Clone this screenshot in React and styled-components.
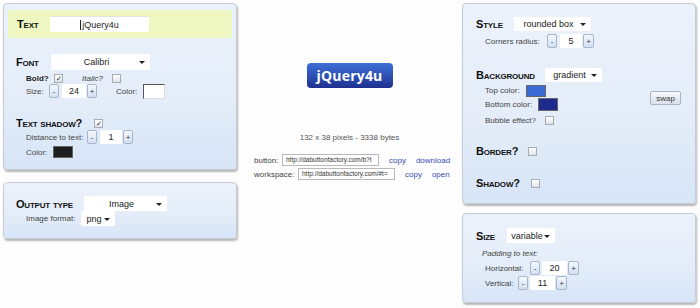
import React from 'react';
import styled, { createGlobalStyle } from 'styled-components';

const Global = createGlobalStyle`
    * { box-sizing: border-box; }
    body {
        margin: 0;
        background: #fdfdfd;
        font-family: "Liberation Sans", Arial, sans-serif;
        color: #333;
    }
`;

const Page = styled.div`
    display: flex;
    width: 700px;
    height: 308px;
    padding: 3px 4px 0 3px;
`;

const Column = styled.div`
    width: 234px;
    display: flex;
    flex-direction: column;
    gap: ${p => p.$gap}px;
`;

const Panel = styled.div`
    height: ${p => p.$h}px;
    border: 1px solid #c4cbd5;
    border-radius: 4px;
    background: linear-gradient(#ecf2fb, #e3ecf8 60%, #d7e5f7);
    box-shadow: 1px 2px 2px rgba(0, 0, 0, 0.28);
    overflow: hidden;
`;

const Band = styled.div`
    margin: 6px 4px 0 4px;
    height: 28px;
    padding-left: 9px;
    display: flex;
    align-items: center;
    background: #eef7c2;
`;

const Row = styled.div`
    display: flex;
    align-items: center;
    height: ${p => p.$h || 14}px;
    margin-top: ${p => p.$mt || 0}px;
    padding-left: ${p => p.$pl || 0}px;
`;

const Heading = styled.span`
    flex: none;
    width: ${p => p.$w}px;
    font: bold 11px "Liberation Sans", Arial, sans-serif;
    font-variant: small-caps;
    letter-spacing: -0.2px;
    color: #111;
`;

const Label = styled.span`
    flex: none;
    width: ${p => (p.$w ? p.$w + 'px' : 'auto')};
    margin-left: ${p => p.$ml || 0}px;
    font-size: 8px;
    font-style: ${p => (p.$italic ? 'italic' : 'normal')};
    font-weight: ${p => (p.$bold ? 'bold' : 'normal')};
    color: ${p => (p.$bold ? '#222' : '#444')};
    white-space: nowrap;
`;

const TextInput = styled.div`
    width: 99px;
    height: 16px;
    background: #fff;
    border-top: 1px solid #e4e4e4;
    display: flex;
    align-items: center;
    justify-content: center;
    font-size: 9px;
    color: #222;
`;

const Caret = styled.span`
    width: 1px;
    height: 10px;
    background: #222;
    margin-right: 1px;
`;

const Select = styled.div`
    flex: none;
    position: relative;
    width: ${p => p.$w}px;
    height: ${p => p.$h || 15}px;
    background: #fff;
    display: flex;
    align-items: center;
    justify-content: center;
    padding-right: 8px;
    font-size: ${p => p.$fs || 9}px;
    color: #222;
    &::after {
        content: '';
        position: absolute;
        right: 5px;
        top: 50%;
        margin-top: -1px;
        border-left: 3px solid transparent;
        border-right: 3px solid transparent;
        border-top: 3px solid #222;
    }
`;

const Check = styled.div`
    flex: none;
    width: 9px;
    height: 9px;
    margin-left: ${p => p.$ml || 0}px;
    border: 1px solid #a7acb3;
    background: linear-gradient(#ffffff, #dfe3e8);
    display: flex;
    align-items: center;
    justify-content: center;
    font-size: 7px;
    line-height: 1;
    color: #333;
`;

const StepBtn = styled.div`
    flex: none;
    width: ${p => p.$w || 10}px;
    height: 14px;
    margin-left: ${p => p.$ml || 0}px;
    border: 1px solid #a6b6cb;
    border-radius: 2px;
    background: linear-gradient(#f5f8fc, #d3dff0);
    display: flex;
    align-items: center;
    justify-content: center;
    font-size: 8px;
    color: #334;
`;

const Value = styled.div`
    flex: none;
    width: ${p => p.$w}px;
    height: 14px;
    margin-left: ${p => p.$ml || 0}px;
    background: #fff;
    display: flex;
    align-items: center;
    justify-content: center;
    font-size: 9px;
    color: #222;
`;

const Swatch = styled.div`
    flex: none;
    width: ${p => p.$w}px;
    height: ${p => p.$h}px;
    background: ${p => p.$c};
    border: 1px solid;
    border-color: ${p => (p.$inset ? '#555 #ddd #ddd #555' : '#666')};
`;

const SubBlock = styled.div`
    display: flex;
    align-items: flex-start;
`;

const SubRows = styled.div`
    display: flex;
    flex-direction: column;
`;

const SwapBtn = styled.div`
    margin: 9px 14px 0 auto;
    width: 31px;
    height: 14px;
    border: 1px solid #a9b2bf;
    border-radius: 2px;
    background: linear-gradient(#f7f9fc, #d9e1ec);
    display: flex;
    align-items: center;
    justify-content: center;
    font-size: 8px;
    color: #333;
`;

const Center = styled.div`
    flex: 1;
    display: flex;
    flex-direction: column;
`;

const Preview = styled.div`
    align-self: center;
    margin-top: 60px;
    width: 86px;
    height: 25px;
    border-radius: 4px;
    background: linear-gradient(#3e6fd6, #2c4fb2 55%, #1e2f8e);
    display: flex;
    align-items: center;
    justify-content: center;
    font: bold 14px "Open Sans", "Liberation Sans", sans-serif;
    color: #fff;
    letter-spacing: 0.2px;
`;

const Stats = styled.div`
    margin-top: 45px;
    height: 10px;
    text-align: center;
    font-size: 8px;
    color: #555;
`;

const LinkRow = styled.div`
    display: flex;
    align-items: center;
    height: 12px;
    margin-top: ${p => p.$mt}px;
    padding-left: 17px;
`;

const UrlBox = styled.div`
    flex: none;
    width: 97px;
    height: 12px;
    border: 1px solid #b9b9b9;
    background: #fff;
    padding: 0 3px;
    font-size: 6.5px;
    line-height: 10px;
    color: #333;
    white-space: nowrap;
    overflow: hidden;
`;

const Link = styled.span`
    margin-left: ${p => p.$ml || 10}px;
    font-size: 8px;
    color: #3a4cb4;
`;

const Stepper = ({ ml, value, w, gap = 3, pw }) => (
    <>
        <StepBtn $ml={ml}>-</StepBtn>
        <Value $w={w} $ml={gap}>{value}</Value>
        <StepBtn $ml={1} $w={pw}>+</StepBtn>
    </>
);

const App = () => {
    return (
        <Page>
            <Global />
            <Column $gap={12}>
                <Panel $h={167}>
                    <Band>
                        <Heading $w={33}>Text</Heading>
                        <TextInput><Caret />jQuery4u</TextInput>
                    </Band>
                    <Row $mt={16} $h={16} $pl={12}>
                        <Heading $w={35}>Font</Heading>
                        <Select $w={99} $h={16}>Calibri</Select>
                    </Row>
                    <Row $mt={3} $h={10} $pl={22}>
                        <Label $w={28} $bold>Bold?</Label>
                        <Check>✓</Check>
                        <Label $w={30} $ml={19} $italic>Italic?</Label>
                        <Check />
                    </Row>
                    <Row $mt={1} $pl={22}>
                        <Label $w={23}>Size:</Label>
                        <Stepper value="24" w={24} />
                        <Label $w={27} $ml={19}>Color:</Label>
                        <Swatch $w={22} $h={15} $c="#fff" $inset />
                    </Row>
                    <Row $mt={18} $pl={12}>
                        <Heading $w={78}>Text shadow?</Heading>
                        <Check>✓</Check>
                    </Row>
                    <Row $pl={22}>
                        <Label $w={61}>Distance to text:</Label>
                        <Stepper value="1" w={22} />
                    </Row>
                    <Row $mt={2} $h={12} $pl={22}>
                        <Label $w={27}>Color:</Label>
                        <Swatch $w={20} $h={12} $c="#1e1e1e" />
                    </Row>
                </Panel>
                <Panel $h={57}>
                    <Row $mt={13} $h={15} $pl={12}>
                        <Heading $w={68}>Output type</Heading>
                        <Select $w={83}>Image</Select>
                    </Row>
                    <Row $h={15} $pl={22}>
                        <Label $w={55}>Image format:</Label>
                        <Select $w={34}>png</Select>
                    </Row>
                </Panel>
            </Column>

            <Center>
                <Preview>jQuery4u</Preview>
                <Stats>132 x 38 pixels - 3338 bytes</Stats>
                <LinkRow $mt={11}>
                    <Label $w={28}>button:</Label>
                    <UrlBox>http://dabuttonfactory.com/b?t</UrlBox>
                    <Link>copy</Link>
                    <Link $ml={10}>download</Link>
                </LinkRow>
                <LinkRow $mt={2}>
                    <Label $w={44}>workspace:</Label>
                    <UrlBox>http://dabuttonfactory.com/#t=</UrlBox>
                    <Link>copy</Link>
                    <Link $ml={10}>open</Link>
                </LinkRow>
            </Center>

            <Column $gap={9}>
                <Panel $h={201}>
                    <Row $mt={13} $pl={13}>
                        <Heading $w={38}>Style</Heading>
                        <Select $w={77} $h={14}>rounded box</Select>
                    </Row>
                    <Row $mt={3} $pl={22}>
                        <Label $w={62}>Corners radius:</Label>
                        <Stepper value="5" w={22} pw={11} />
                    </Row>
                    <Row $mt={20} $pl={13}>
                        <Heading $w={69}>Background</Heading>
                        <Select $w={57} $h={14}>gradient</Select>
                    </Row>
                    <SubBlock>
                        <SubRows>
                            <Row $mt={2} $h={13} $pl={22}>
                                <Label $w={41}>Top color:</Label>
                                <Swatch $w={20} $h={12} $c="#3b6ad4" />
                            </Row>
                            <Row $mt={1} $h={13} $pl={22}>
                                <Label $w={53}>Bottom color:</Label>
                                <Swatch $w={20} $h={13} $c="#1f2b8c" />
                            </Row>
                            <Row $mt={4} $h={10} $pl={22}>
                                <Label $w={60}>Bubble effect?</Label>
                                <Check />
                            </Row>
                        </SubRows>
                        <SwapBtn>swap</SwapBtn>
                    </SubBlock>
                    <Row $mt={19} $pl={13}>
                        <Heading $w={52}>Border?</Heading>
                        <Check />
                    </Row>
                    <Row $mt={18} $pl={13}>
                        <Heading $w={55}>Shadow?</Heading>
                        <Check />
                    </Row>
                </Panel>
                <Panel $h={90}>
                    <Row $mt={14} $h={15} $pl={13}>
                        <Heading $w={31}>Size</Heading>
                        <Select $w={48}>variable</Select>
                    </Row>
                    <Row $mt={4} $h={12} $pl={19}>
                        <Label $italic>Padding to text:</Label>
                    </Row>
                    <Row $mt={2} $pl={22}>
                        <Label $w={45}>Horizontal:</Label>
                        <Stepper value="20" w={25} gap={2} pw={11} />
                    </Row>
                    <Row $mt={1} $pl={22}>
                        <Label $w={33}>Vertical:</Label>
                        <Stepper value="11" w={25} gap={2} pw={11} />
                    </Row>
                </Panel>
            </Column>
        </Page>
    );
};

export default App;
